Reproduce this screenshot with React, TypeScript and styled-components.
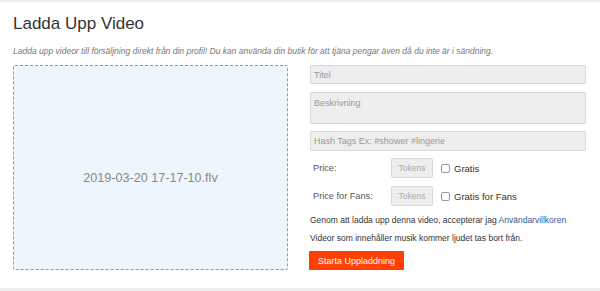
import React from 'react';
import styled, { createGlobalStyle } from 'styled-components';

const GlobalStyle = createGlobalStyle`
  html, body {
    margin: 0;
    padding: 0;
    background: #fff;
  }
  body {
    font-family: "Liberation Sans", Arial, Helvetica, sans-serif;
    color: #333;
  }
`;

const Page = styled.div`
  width: 600px;
  height: 291px;
  box-sizing: border-box;
  border-top: 2px solid #eeeeee;
  border-bottom: 3px solid #eeeeee;
  overflow: hidden;
`;

const Panel = styled.div`
  padding: 0 13px 0 13px;
`;

const Heading = styled.h1`
  margin: 0;
  padding-top: 12px;
  font-size: 17px;
  line-height: 20px;
  font-weight: 400;
  color: #333;
`;

const Intro = styled.p`
  margin: 12px 0 0 0;
  font-size: 8.5px;
  line-height: 10px;
  font-style: italic;
  color: #777;
  white-space: nowrap;
`;

const Columns = styled.div`
  display: flex;
  gap: 22px;
  margin-top: 9px;
`;

const DropZone = styled.div`
  width: 275px;
  height: 205px;
  box-sizing: border-box;
  border: 1px dashed #999;
  border-radius: 2px;
  background: #eef6fd;
  display: flex;
  align-items: center;
  justify-content: center;
  padding-top: 21px;
  font-size: 12.6px;
  color: #888;
`;

const Form = styled.div`
  width: 276px;
  display: flex;
  flex-direction: column;
`;

const Field = styled.div<{ $h: number; $mb: number }>`
  height: ${(p) => p.$h}px;
  margin-bottom: ${(p) => p.$mb}px;
  box-sizing: border-box;
  border: 1px solid #d8d8d8;
  border-radius: 2px;
  background: #eeeeee;
  padding: 0 0 0 3px;
  font-size: 9px;
  color: #999;
  display: flex;
  align-items: ${(p) => (p.$h > 24 ? 'flex-start' : 'center')};
  padding-top: ${(p) => (p.$h > 24 ? '5px' : '0')};
`;

const PriceRow = styled.div<{ $mb: number }>`
  display: flex;
  align-items: center;
  height: 20px;
  margin-bottom: ${(p) => p.$mb}px;
`;

const PriceLabel = styled.span`
  width: 81px;
  padding-left: 3px;
  box-sizing: border-box;
  font-size: 9.2px;
  color: #555;
`;

const Tokens = styled.div`
  width: 42px;
  height: 20px;
  box-sizing: border-box;
  border: 1px solid #d8d8d8;
  border-radius: 2px;
  background: #eeeeee;
  display: flex;
  align-items: center;
  justify-content: center;
  font-size: 8.5px;
  color: #aaa;
`;

const Check = styled.span`
  width: 7px;
  height: 7px;
  margin-left: 8px;
  border: 1px solid #999;
  border-radius: 2px;
  background: #fff;
`;

const CheckLabel = styled.span`
  margin-left: 4px;
  font-size: 9.5px;
  color: #333;
`;

const Note = styled.p<{ $mb: number }>`
  margin: 0 0 ${(p) => p.$mb}px 0;
  font-size: 8.5px;
  line-height: 12px;
  color: #333;
`;

const Link = styled.a`
  color: #34589d;
  text-decoration: none;
`;

const Button = styled.button`
  align-self: flex-start;
  height: 19px;
  padding: 0 9px;
  margin-left: -1px;
  border: none;
  border-radius: 1px;
  background: #ff4000;
  color: #fff;
  font-family: inherit;
  font-size: 9px;
`;

export default function App() {
  return (
    <>
      <GlobalStyle />
      <Page>
        <Panel>
          <Heading>Ladda Upp Video</Heading>
          <Intro>
            Ladda upp videor till försäljning direkt från din profil! Du kan använda din butik för
            att tjäna pengar även då du inte är i sändning.
          </Intro>
          <Columns>
            <DropZone>2019-03-20 17-17-10.flv</DropZone>
            <Form>
              <Field $h={19} $mb={8}>Titel</Field>
              <Field $h={32} $mb={7}>Beskrivning</Field>
              <Field $h={20} $mb={7}>Hash Tags Ex: #shower #lingerie</Field>
              <PriceRow $mb={8}>
                <PriceLabel>Price:</PriceLabel>
                <Tokens>Tokens</Tokens>
                <Check />
                <CheckLabel>Gratis</CheckLabel>
              </PriceRow>
              <PriceRow $mb={8}>
                <PriceLabel>Price for Fans:</PriceLabel>
                <Tokens>Tokens</Tokens>
                <Check />
                <CheckLabel>Gratis for Fans</CheckLabel>
              </PriceRow>
              <Note $mb={6}>
                Genom att ladda upp denna video, accepterar jag <Link href="#">Användarvillkoren</Link>
              </Note>
              <Note $mb={7}>Videor som innehåller musik kommer ljudet tas bort från.</Note>
              <Button>Starta Uppladdning</Button>
            </Form>
          </Columns>
        </Panel>
      </Page>
    </>
  );
}
